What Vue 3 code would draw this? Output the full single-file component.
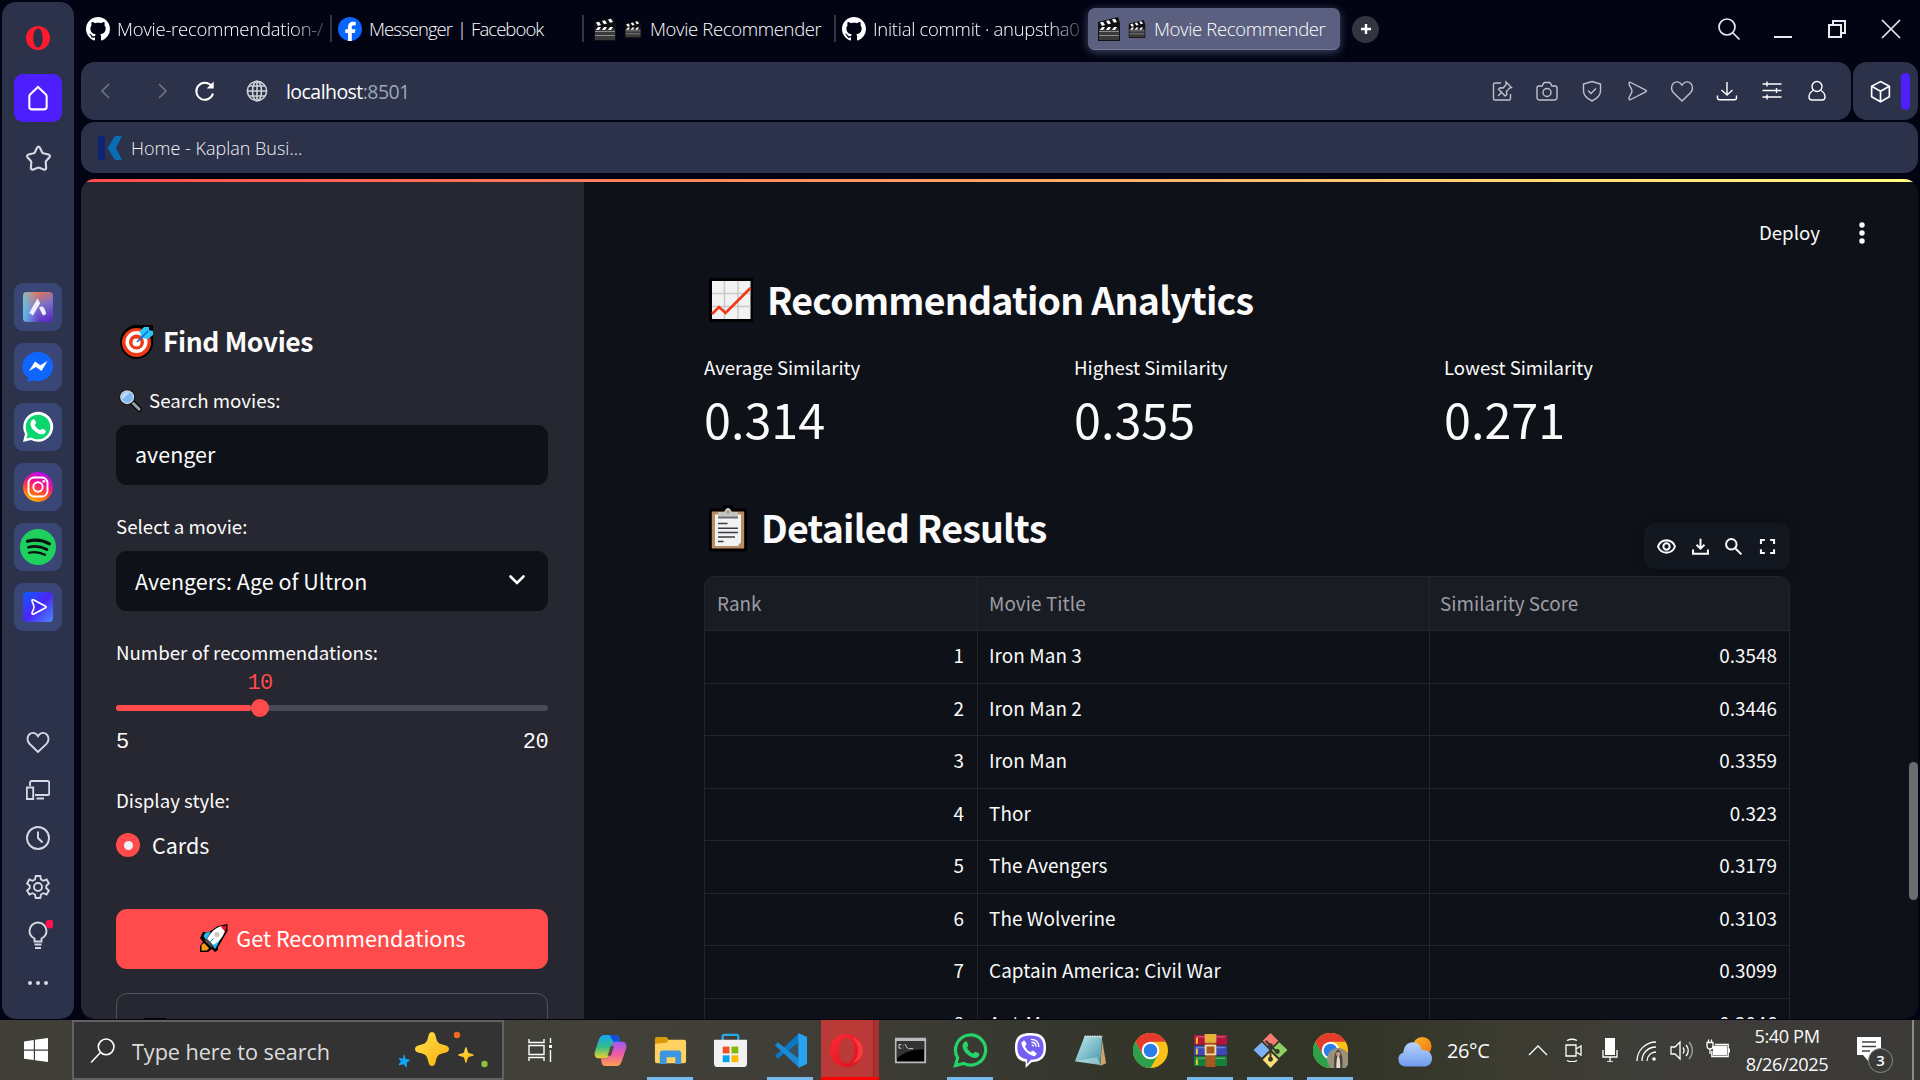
<script setup>
const tabs = [
  { icon: 'github', title: 'Movie-recommendation-/', cls: 't1 fade' },
  { icon: 'facebook', title: 'Messenger | Facebook', cls: 't2' },
  { icon: 'clapper', title: 'Movie Recommender', cls: 't3', extra: true },
  { icon: 'github', title: 'Initial commit · anupstha0', cls: 't4 fade' },
  { icon: 'clapper', title: 'Movie Recommender', cls: 't5 active', extra: true },
]
const apps = ['aria', 'messenger', 'whatsapp', 'instagram', 'spotify', 'player']
const tools = ['heart', 'devices', 'clock', 'gear', 'bulb', 'dots']
const actions = ['pin', 'camera', 'shield', 'send', 'heart', 'download', 'sliders', 'person']
const metrics = [
  { label: 'Average Similarity', value: '0.314' },
  { label: 'Highest Similarity', value: '0.355' },
  { label: 'Lowest Similarity', value: '0.271' },
]
const rows = [
  [1, 'Iron Man 3', '0.3548'],
  [2, 'Iron Man 2', '0.3446'],
  [3, 'Iron Man', '0.3359'],
  [4, 'Thor', '0.323'],
  [5, 'The Avengers', '0.3179'],
  [6, 'The Wolverine', '0.3103'],
  [7, 'Captain America: Civil War', '0.3099'],
  [8, 'Ant-Man', '0.3046'],
]
const taskApps = [
  { icon: 'copilot' },
  { icon: 'explorer', open: true },
  { icon: 'store' },
  { icon: 'vscode', open: true },
  { icon: 'operabig', alert: true },
  { icon: 'cmd' },
  { icon: 'wa', open: true },
  { icon: 'viber' },
  { icon: 'notepad' },
  { icon: 'chrome' },
  { icon: 'winrar', open: true },
  { icon: 'git', open: true },
  { icon: 'chromeuser', open: true },
]
</script>

<template>
  <svg class="defs" aria-hidden="true">
    <defs>
      <linearGradient id="gAria" x1=".3" y1="0" x2=".7" y2="1"><stop offset="0" stop-color="#f2784a" /><stop offset=".5" stop-color="#7a6fc8" /><stop offset="1" stop-color="#5a2fc4" /></linearGradient>
      <linearGradient id="gAria2" x1="0" y1=".5" x2=".5" y2=".5"><stop offset="0" stop-color="#5fd0ee" stop-opacity=".8" /><stop offset="1" stop-color="#5fd0ee" stop-opacity="0" /></linearGradient>
      <linearGradient id="gInsta" x1=".2" y1="1" x2=".6" y2="0"><stop offset="0" stop-color="#ffc400" /><stop offset=".35" stop-color="#ff5a1f" /><stop offset=".65" stop-color="#f5108a" /><stop offset="1" stop-color="#b010ee" /></linearGradient>
      <linearGradient id="gPlay" x1="0" y1="0" x2="1" y2="1"><stop offset="0" stop-color="#0f5cff" /><stop offset=".5" stop-color="#4a25f5" /><stop offset="1" stop-color="#4a8cff" /></linearGradient>
      <linearGradient id="gStar" x1="0" y1="0" x2="1" y2="1"><stop offset="0" stop-color="#ffe14d" /><stop offset="1" stop-color="#f9ae0c" /></linearGradient>
      <linearGradient id="gCopA" x1="0" y1="0" x2="0" y2="1"><stop offset="0" stop-color="#19a5f5" /><stop offset=".5" stop-color="#2fbc8c" /><stop offset="1" stop-color="#f0d22c" /></linearGradient>
      <linearGradient id="gCopB" x1="0" y1="0" x2="0" y2="1"><stop offset="0" stop-color="#9b5cf5" /><stop offset=".5" stop-color="#ee5aa5" /><stop offset="1" stop-color="#ffa04f" /></linearGradient>
      <linearGradient id="gOpera" x1="0" y1="0" x2="1" y2="1"><stop offset="0" stop-color="#ff2a36" /><stop offset="1" stop-color="#d8101d" /></linearGradient>
      <linearGradient id="gCloud" x1="0" y1="0" x2="0" y2="1"><stop offset="0" stop-color="#b8d4fb" /><stop offset="1" stop-color="#6f9bf0" /></linearGradient>
      <linearGradient id="gSun" x1="0" y1="0" x2="1" y2="1"><stop offset="0" stop-color="#fdb924" /><stop offset="1" stop-color="#f2700f" /></linearGradient>
      <linearGradient id="gNote" x1="0" y1="0" x2="1" y2="1"><stop offset="0" stop-color="#c5ecf2" /><stop offset="1" stop-color="#3d93a5" /></linearGradient>
    </defs>
    <symbol id="github" viewBox="0 0 16 16"><path fill="#fff" d="M8 0C3.58 0 0 3.58 0 8c0 3.54 2.29 6.53 5.47 7.59.4.07.55-.17.55-.38 0-.19-.01-.82-.01-1.49-2.01.37-2.53-.49-2.69-.94-.09-.23-.48-.94-.82-1.13-.28-.15-.68-.52-.01-.53.63-.01 1.08.58 1.23.82.72 1.21 1.87.87 2.33.66.07-.52.28-.87.51-1.07-1.78-.2-3.64-.89-3.64-3.95 0-.87.31-1.59.82-2.15-.08-.2-.36-1.02.08-2.12 0 0 .67-.21 2.2.82.64-.18 1.32-.27 2-.27s1.36.09 2 .27c1.53-1.04 2.2-.82 2.2-.82.44 1.1.16 1.92.08 2.12.51.56.82 1.27.82 2.15 0 3.07-1.87 3.75-3.65 3.95.29.25.54.73.54 1.48 0 1.07-.01 1.93-.01 2.2 0 .21.15.46.55.38A8.01 8.01 0 0 0 16 8c0-4.42-3.58-8-8-8z" /></symbol>
    <symbol id="facebook" viewBox="0 0 24 24"><circle cx="12" cy="12" r="12" fill="#0866ff" /><path fill="#fff" d="M10 24v-8H7.3v-3.8H10v-1.7c0-4 1.8-5.8 5.6-5.8.7 0 1.600.1 2.100.3v3.200h-1.500c-1.800 0-2.400.7-2.400 2.400v1.600h3.700l-.7 3.800h-3v8z" /></symbol>
    <symbol id="clapper" viewBox="0 0 24 24"><path fill="#111" d="M1 5 21 0l2 6v18H1z" /><path fill="#3a3a3a" d="M2 11.500h20V23H2z" /><path fill="#8c8c8c" d="M2 14h20v1H2zm0 4h20v1H2z" /><path fill="#fff" d="m3 5.500 3-.8L8 8 5 9zm6-1.600 3-.7L14 6.500l-3 .8zm6-1.500 3-.7L20 5l-3 .8zM3 13l2-3h3l-2 3zm6 0 2-3h3l-2 3zm6 0 2-3h3l-2 3z" /></symbol>
    <symbol id="opera" viewBox="0 0 24 24"><path fill="#ff1b2d" fill-rule="evenodd" d="M12 0a12 12 0 1 0 0 24 12 12 0 0 0 0-24zm0 2.600c2.700 0 4.700 4 4.700 9.400s-2 9.400-4.700 9.400-4.700-4-4.700-9.400S9.300 2.600 12 2.600z" /></symbol>
    <symbol id="home" viewBox="0 0 24 24"><path d="M4 10.500c0-.8.3-1.400.9-2L12 1.800l7.100 6.700c.6.6.9 1.200.9 2V20a2.500 2.500 0 0 1-2.500 2.500h-11A2.500 2.500 0 0 1 4 20z" /></symbol>
    <symbol id="star" viewBox="0 0 24 24"><path d="M12 1.500c.7 0 1 .5 1.300 1l2 4.100c.2.400.6.700 1 .8l4.500 1c1.600.4 1.700 1.700.8 2.700l-2.800 3.100c-.3.400-.5.800-.4 1.300l.4 4.500c.1 1.600-1 2.200-2.300 1.700l-3.700-1.400c-.5-.2-1-.2-1.500 0l-3.800 1.400c-1.300.5-2.400-.1-2.300-1.700l.4-4.500c0-.5-.1-.9-.4-1.300l-2.800-3.100c-.9-1-.8-2.300.8-2.700l4.500-1c.4-.1.800-.4 1-.8l2-4.100c.3-.5.600-1 1.300-1z" /></symbol>
    <symbol id="aria" viewBox="0 0 36 36"><rect x="3" y="3" width="30" height="30" rx="4" fill="url(#gAria)" /><rect x="3" y="3" width="30" height="30" rx="4" fill="url(#gAria2)" /><path fill="#eef" d="m17.500 9.300 2.700 4.900-7.300 12.300-3.600-2.700zM19 18.500l3-1.200c2.300 1.500 3.700 4.200 4.200 7.700l-3.200 1.500z" /></symbol>
    <symbol id="messenger" viewBox="0 0 36 36"><path fill="#0f66ff" d="M18 3a15 14.500 0 1 1-4.500 28.300L8 33l.2-4A15 14.500 0 0 1 18 3z" /><path fill="#fff" d="m9 22 6-9.500 5.300 3.700L27.500 12 21.500 22l-5.500-4z" /></symbol>
    <symbol id="whatsapp" viewBox="0 0 36 36"><path fill="#fff" d="m3 33 2-8a15 15 0 1 1 6 6z" /><circle cx="18" cy="18" r="12.300" fill="#0bd56e" /><path fill="#0bd56e" d="m6.500 29.500 1.500-6 5 4.500z" /><path fill="#fff" d="M12.500 10.800c1-.8 2-.7 2.500.4l1 2.400c.3.900-1.300 2-1.100 2.600 1 2.300 2.700 4 5 4.900.7.200 1.600-1.700 2.400-1.400l2.700 1.300c1 .6.900 1.700.2 2.700-1.500 2-4 2-7 .7-4-1.800-7.500-5.500-7.800-9.300-.1-1.800.8-3.300 2.100-4.300z" /></symbol>
    <symbol id="instagram" viewBox="0 0 36 36"><circle cx="18" cy="18" r="15" fill="url(#gInsta)" /><g fill="none" stroke="#fff" stroke-width="1.900"><rect x="8.500" y="8.500" width="19" height="19" rx="5.500" /><circle cx="18" cy="18" r="4.700" /></g><circle cx="23.800" cy="12.300" r="1.400" fill="#fff" /></symbol>
    <symbol id="spotify" viewBox="0 0 36 36"><circle cx="18" cy="18" r="18" fill="#1ed05e" /><g fill="none" stroke="#0a1210" stroke-linecap="round"><path stroke-width="3.200" d="M7.500 12.300c7-2 15-1.400 22 2.500" /><path stroke-width="2.700" d="M8.500 18.300c6-1.800 12.500-1 18.500 2.200" /><path stroke-width="2.200" d="M9 23.800c5-1.400 10.500-.9 16 2" /></g></symbol>
    <symbol id="player" viewBox="0 0 36 36"><rect x="3" y="3" width="30" height="30" rx="4" fill="url(#gPlay)" /><path fill="none" stroke="#fff" stroke-width="1.600" stroke-linejoin="round" d="M12 11.500c0-.7.700-1 1.400-.7l12.200 6.400c.8.400.8 1.200 0 1.600l-12.200 6.400c-.7.300-1.400 0-1.400-.7 0-2 2-4 2-6.500s-2-4.500-2-6.500z" /></symbol>
    <symbol id="heart" viewBox="0 0 24 24"><path d="M12 22 3.500 13.800C1 11.300.8 7 3.200 4.500c2.400-2.400 6.500-2.200 8.300 1l.5.800.5-.8c1.800-3.200 5.900-3.400 8.300-1 2.400 2.500 2.200 6.800-.3 9.300z" /></symbol>
    <symbol id="devices" viewBox="0 0 24 24"><path d="M4 8V5a2 2 0 0 1 2-2h15.500a1.700 1.700 0 0 1 1.700 1.700v10.600a1.700 1.700 0 0 1-1.700 1.700H9M10.500 20.500H18M.8 9.500h6.400V21H.8z" /></symbol>
    <symbol id="clock" viewBox="0 0 24 24"><circle cx="12" cy="12" r="11" /><path d="M12 5.500V12l4.500 4.500" /></symbol>
    <symbol id="gear" viewBox="0 0 24 24"><path d="M9.700 1h4.600l.7 3.500 2.300 1.300 3.300-1.300 2.300 4-2.600 2.300v2.400l2.600 2.300-2.300 4-3.300-1.300-2.300 1.300-.7 3.500H9.700L9 19.500l-2.300-1.300-3.300 1.300-2.300-4 2.600-2.300v-2.400L1.100 8.500l2.300-4 3.300 1.300L9 4.500z" /><circle cx="12" cy="12" r="4" /></symbol>
    <symbol id="bulb" viewBox="0 0 30 30"><path d="M11.500 21.500v-3C8.500 17 6.500 14.500 6.500 11a8.500 8.500 0 0 1 17 0c0 3.500-2 6-5 7.500v3z" /><path d="M11.500 24.500h7M12 28h6" /><circle cx="27" cy="4" r="4.500" fill="#ff1150" stroke="none" /></symbol>
    <symbol id="dots" viewBox="0 0 24 24"><g fill="#d4dae4" stroke="none"><circle cx="4" cy="12" r="2" /><circle cx="12" cy="12" r="2" /><circle cx="20" cy="12" r="2" /></g></symbol>
    <symbol id="pin" viewBox="0 0 24 24"><path d="M11 4H5a1.500 1.500 0 0 0-1.500 1.500v14A1.500 1.500 0 0 0 5 21h14a1.500 1.500 0 0 0 1.500-1.500V15M16 3l5.500 5.500-2 .5-3 3.500.3 3-1.600 1.500-6.700-6.700 1.600-1.500 3 .2 3-3.300zM11.500 13.500 8 17" /></symbol>
    <symbol id="camera" viewBox="0 0 24 24"><path d="M4 7h3l1.500-2.700c.3-.5.700-.8 1.300-.8h4.400c.6 0 1 .3 1.300.8L17 7h3a2 2 0 0 1 2 2v9.500a2.500 2.500 0 0 1-2.500 2.500h-15A2.500 2.500 0 0 1 2 18.500V9a2 2 0 0 1 2-2z" /><circle cx="12" cy="13.500" r="4" /></symbol>
    <symbol id="shield" viewBox="0 0 24 24"><path d="M12 2.500 20.500 5v7c0 4.500-3.500 7.500-8.500 10-5-2.500-8.500-5.500-8.500-10V5zM8 11.500l3 3 5-5" /></symbol>
    <symbol id="send" viewBox="0 0 24 24"><path d="M4 4.500c0-1 .8-1.500 1.700-1l15 7.600c1 .5 1 1.300 0 1.800l-15 7.600c-.9.500-1.700 0-1.700-1 0-2.500 3-4.700 3-7.500s-3-5-3-7.500z" /></symbol>
    <symbol id="download" viewBox="0 0 24 24"><path d="M12 3v13M6.500 11l5.500 5 5.500-5M2.500 16.500v2.300c0 1.300.7 2 2 2h15c1.300 0 2-.7 2-2v-2.300" /></symbol>
    <symbol id="sliders" viewBox="0 0 24 24"><path d="M2.500 5h19M2.500 11.500h19M2.500 18h19M7 2.500v5M16.500 9v5M7 15.500v5" /></symbol>
    <symbol id="person" viewBox="0 0 24 24"><circle cx="12" cy="7.500" r="5" /><path d="M8 11.500c-2.500 1.500-4 4-4 6.500 0 2 1.200 3 3 3h10c1.800 0 3-1 3-3 0-2.500-1.500-5-4-6.500" /></symbol>
    <symbol id="cube" viewBox="0 0 24 24"><path d="M12 2.500 20.500 7v10L12 21.800 3.500 17V7zM3.500 7l8.500 4.800L20.500 7M12 11.800v10" /></symbol>
    <symbol id="globe" viewBox="0 0 24 24"><circle cx="12" cy="12" r="9.600" /><ellipse cx="12" cy="12" rx="4.500" ry="9.600" /><path d="M2.500 12h19M4 7h16M4 17h16M12 2.400v19" /></symbol>
    <symbol id="reload" viewBox="0 0 24 24"><path d="M20 14.500A8.500 8.500 0 1 1 18.500 7" /><path fill="currentColor" stroke="none" d="M20.700 2.500v7h-7z" /></symbol>
    <symbol id="target" viewBox="0 0 34 34"><path fill="#000" d="M17 0h16v15a16.500 17 0 1 1-16-15z" /><circle cx="16.500" cy="17.500" r="14.500" fill="#f03a17" /><circle cx="16.500" cy="17" r="11" fill="#fff" /><circle cx="16.500" cy="17" r="7.500" fill="#f03a17" /><circle cx="16.500" cy="17.500" r="4" fill="#fff" /><path fill="#26c6f7" d="m20 6 4-4h5v3l4 1v4l-5 4-7-1z" /><path stroke="#1266d6" stroke-width="1.600" d="m17 17 11-11" /></symbol>
    <symbol id="loupe" viewBox="0 0 24 24"><path stroke="#000" stroke-width="5.500" stroke-linecap="round" d="m14 14 7 7" /><path stroke="#90a4ae" stroke-width="3" stroke-linecap="round" d="m14 14 7 7" /><circle cx="8.500" cy="8.500" r="8.300" fill="#111" /><circle cx="8.500" cy="8.500" r="7.300" fill="#c9d8e2" /><circle cx="8.500" cy="8.500" r="5.800" fill="#7fb8f0" /><path fill="#b8dcfa" d="M3.500 11a6 6 0 0 1 8-7.500z" /></symbol>
    <symbol id="rocket" viewBox="0 0 28 28"><path fill="#000" d="M27.500 0v7L21 18l-3 5v3l-3 2-3-3-4 3H0v-6l3-4-3-4 3-6h6L18 2z" /><path fill="#25b9f2" d="m3.500 12 2-3.500L11 8l-5 8zM15 17l5-1-3 6-2 3-3-4z" /><path fill="#fff" d="M22 2c-6 1-11 6-15 13l6 6c6-3 10-8 12-14z" /><path fill="#e8112d" d="M20.500 2.500 26.300 1.500 25.500 8z" /><circle cx="17" cy="10.500" r="2.600" fill="#c6c6c6" /><path fill="#4a4a4a" d="m6.500 15 7 6.500-2 2-7-6.500z" /><path fill="#fb9a16" d="m4 19 5 5-2 2.500H1.500V21z" /><path stroke="#1b9de0" d="m9.500 18.500 4-4" /></symbol>
    <symbol id="chart" viewBox="0 0 44 44"><path d="M0 0h44v44H0z" /><path fill="#f2f2f2" d="M3 3h38.500v38H3z" /><path fill="none" stroke="#c9c9c9" stroke-width="1.500" d="M15.500 3v38M29 3v38M3 15.500h38.500M3 28.500h38.500" /><path fill="none" stroke="#f03a17" stroke-width="2.700" d="m3 36 7-7 6.500 6L41.500 10" /></symbol>
    <symbol id="clipboard" viewBox="0 0 38 46"><path d="M2 3h11l2-3h8l2 3h11l2 2v39l-2 2H2l-2-2V5z" /><path fill="#b98c62" d="M2.800 6h32.400v37H2.800z" /><path fill="#f2f2f2" d="M6 9h26v28l-3 3.500H6z" /><path fill="#c3c3c3" d="M9 6.500h6L16.500 4c1-2 4-2 5 0L23 6.500h6V11H9z" /><circle cx="19" cy="6.500" r="1.500" fill="#b98c62" /><path stroke="#3c3a42" stroke-width="1.500" d="M9 18h9.500M9 22.700h20M9 27h20M9 31.500h17M9 36h5.500" /><path stroke="#6b6b6b" stroke-width="2" d="M9 12h20" /><path fill="#b98c62" d="M32 37v3.500h-3z" /></symbol>
    <symbol id="eye" viewBox="0 0 24 24"><path d="M12 5C7.500 5 4 7.500 2.300 12 4 16.500 7.500 19 12 19s8-2.500 9.700-7C20 7.500 16.500 5 12 5z" /><circle cx="12" cy="12" r="3.600" /></symbol>
    <symbol id="tdown" viewBox="0 0 24 24"><path d="M12 3v11M7.500 10l4.500 4.500 4.500-4.500M3.500 15.500v4.700h17v-4.700" /></symbol>
    <symbol id="tsearch" viewBox="0 0 24 24"><circle cx="9.500" cy="9.500" r="6" /><path d="m14 14 7 7" /></symbol>
    <symbol id="tfull" viewBox="0 0 24 24"><path d="M4.500 9V4.500H9M15 4.500h4.500V9M19.500 15v4.500H15M9 19.500H4.500V15" /></symbol>
    <symbol id="copilot" viewBox="0 0 36 36"><path fill="url(#gCopA)" d="M12 2h11c2 0 3.500 1.200 4 3l1 4h-4c-2.500 0-4 1.500-4.700 4L17 22c-.8 2.500-2 4-5 4H6c-4 0-5-3-4-7L6 7c1-3.500 3-5 6-5z" /><path fill="#1550d8" d="M17 2h6c2 0 3.500 1.200 4 3l1 4h-7z" /><path fill="url(#gCopB)" d="M24 34H13c-2 0-3.500-1.200-4-3l-1-5h4c3 0 4.200-1.500 5-4l2.300-9c.7-2.500 2-4 5-4H30c4 0 5 3 4 7l-4 12c-1 4-3 6-6 6z" /><path fill="#3f403a" d="M18 13.500h3.500l-3 10H15z" opacity=".85" /></symbol>
    <symbol id="explorer" viewBox="0 0 36 36"><path fill="#d99a0b" d="M2 6a2 2 0 0 1 2-2h10l3 4v5H2z" /><path fill="#ffd262" d="M2 11 14 10l2-3h16a2 2 0 0 1 2 2v20a2 2 0 0 1-2 2H4a2 2 0 0 1-2-2z" /><path fill="#3b97e0" d="M7 21a3 3 0 0 1 3-3h16a3 3 0 0 1 3 3v11h-6v-7h-9v7H7z" /></symbol>
    <symbol id="store" viewBox="0 0 36 36"><path fill="none" stroke="#29a8ea" stroke-width="2.400" d="M10 10V3.500A1.500 1.500 0 0 1 11.500 2h13A1.500 1.500 0 0 1 26 3.500V10" /><path fill="#f2f2f2" d="M1 7h34v24a4 4 0 0 1-4 4H5a4 4 0 0 1-4-4z" /><path fill="#f25022" d="M10 14h7v7h-7z" /><path fill="#7fba00" d="M19 14h7v7h-7z" /><path fill="#00a4ef" d="M10 23h7v7h-7z" /><path fill="#ffb900" d="M19 23h7v7h-7z" /></symbol>
    <symbol id="vscode" viewBox="0 0 36 36"><path fill="#0a78c4" d="M26 1 2 23.500l3 3L27 9z" /><path fill="#1a8ad4" d="M26 35 2 12.500l3-3L27 27z" /><path fill="#27a3ef" d="m26 0 9 4v28l-9 4z" /><path fill="#1a8ad4" d="m26 9-11 9 11 9z" opacity=".25" /></symbol>
    <symbol id="operabig" viewBox="0 0 36 36"><path fill="url(#gOpera)" fill-rule="evenodd" d="M18 1a17 17 0 1 0 0 34 17 17 0 0 0 0-34zm0 4c4.500 0 8 5.500 8 13s-3.500 13-8 13-8-5.500-8-13 3.500-13 8-13z" /><path fill="#ff4a4a" d="M24 5c4 4 6 8 6 13s-2 9-6 13c6-1 11-6 11-13S30 6 24 5z" opacity=".7" /></symbol>
    <symbol id="cmd" viewBox="0 0 36 36"><path fill="#b9bcbe" d="M1 4h34v28H1z" /><path d="M3 8h30v22H3z" /><path fill="#333" d="M3 8h30v9c-10-1-22 2-30 10z" /><path fill="none" stroke="#ddd" d="M8 11.500H5.500v4H8M10 12.500v.5M10 15v.5M12 11l3 5M16 16h5" /></symbol>
    <symbol id="wa" viewBox="0 0 36 36"><path fill="none" stroke="#25d366" stroke-width="3.300" d="m2.500 33.500 2.300-8A15.500 15.500 0 1 1 11 31.300z" /><path fill="#25d366" d="M12 9c1-.8 2-.6 2.500.4l1.300 3c.3.900-1.500 2-1.300 2.700 1 2.500 3.500 5 6 6 .9.300 2-2 2.900-1.700l3 1.500c1 .6.900 1.700.2 2.700-1.500 2.300-4.500 2.600-7.500 1.300-4.500-2-9-6.500-9.300-10.900-.1-2 .8-4 2.200-5z" /></symbol>
    <symbol id="viber" viewBox="0 0 36 36"><path fill="#fff" d="M18 0c11 0 16 4 16 15 0 10-5 15-15 15l-6 6v-6.500C5 28.500 2 24 2 15 2 4 7 0 18 0z" /><path fill="#7360f2" d="M18 2.500c9.500 0 13.500 3.500 13.500 12.500 0 8.500-4 12.500-13 12.500l-4 4.500v-5C7.500 26 4.500 22.500 4.500 15c0-9 4-12.500 13.500-12.500z" /><path fill="#fff" d="M11.500 7.500 14 11l-1.500 2.500c1 3 3 5 5.500 6L20.500 18l4 3-2 3c-6-1-13-7-14-14z" /><path fill="none" stroke="#fff" stroke-width="1.400" d="M18.500 6.500c5 0 8 3 8 8M19 9.500c3 0 4.700 1.800 4.700 4.700M19.300 12.300c1.100 0 1.700.7 1.700 1.700" /></symbol>
    <symbol id="notepad" viewBox="0 0 36 36"><path fill="#cda36a" d="m30 7 4 24-6 3z" /><path fill="url(#gNote)" d="M12 3h18l-2 30-26-4z" /><path stroke="#d9dcdc" stroke-width="2" stroke-dasharray="1.500 1" d="M12 3.500h18" /><path fill="#fff" d="m2 29 26 4-3-8z" opacity=".35" /></symbol>
    <symbol id="chrome" viewBox="0 0 36 36"><circle cx="18" cy="18" r="18" fill="#fbc116" /><path fill="#e33b2e" d="M2.400 9A18 18 0 0 1 33.600 9H18l-8 13.500z" /><path fill="#2da04e" d="M2.400 9A18 18 0 0 0 18 36l7.800-13.500H10.200z" /><circle cx="18" cy="18" r="9" fill="#fff" /><circle cx="18" cy="18" r="7" fill="#2b7de9" /></symbol>
    <symbol id="chromeuser" viewBox="0 0 36 36"><use href="#chrome" width="36" height="36" /><circle cx="26" cy="27" r="11.500" fill="#99907c" /><path fill="#4d453c" d="M22 37c-1-9 0-18 4-20 4 2 5 11 4 20z" /><path fill="#e3ddd0" d="M24 36c0-6 .5-12 2-13 1.500 1 2 7 2 13z" /><circle cx="26" cy="21.500" r="2.300" fill="#c09878" /></symbol>
    <symbol id="winrar" viewBox="0 0 36 36"><path fill="#b3153e" d="M1 2h34v10H1z" /><path fill="#3a48b8" d="M1 13h34v10H1z" /><path fill="#148038" d="M1 24h34v10H1z" /><path stroke="#ffffff" stroke-opacity=".3" stroke-width="1.500" d="M3 4h30M3 15h30M3 26h30" /><path fill="#f5c92c" d="M3 5h2v6H3zm0 11h2v6H3zm0 11h2v6H3z" /><path fill="#a9581f" d="M13 1h10v34H13z" /><path fill="#e5b13a" d="M12 1h12v9H12z" /><path fill="none" stroke="#eed9a8" stroke-width="2" d="M13 13h10v9H13z" /></symbol>
    <symbol id="git" viewBox="0 0 36 36"><path fill="#f47c73" d="M18 0 26 8l-8 8-8-8z" /><path fill="#7eb0f5" d="m9 9.500 8 8-8 8-8.500-8z" /><path fill="#8ccf62" d="m27 9.500 8.500 8-8.500 8-8-8z" /><path fill="#fbdf79" d="m18 19.500 8 8-8 8.500-8-8.500z" /><path fill="none" stroke="#35382c" stroke-width="2" d="M13 8l5 5v15M18 14l8 6" /><g fill="#35382c"><circle cx="18" cy="13" r="2.500" /><circle cx="18" cy="27" r="2.500" /><circle cx="25" cy="19" r="2.500" /></g></symbol>
  </svg>

  <div class="screen">
    <div class="browser">
      <aside class="rail">
        <svg class="logo"><use href="#opera" /></svg>
        <div class="home"><svg><use href="#home" /></svg></div>
        <svg class="star"><use href="#star" /></svg>
        <div class="apps">
          <div v-for="a in apps" :key="a" class="app"><svg><use :href="'#' + a" /></svg></div>
        </div>
        <div class="tools">
          <div v-for="t in tools" :key="t" class="tool"><svg :class="t"><use :href="'#' + t" /></svg></div>
        </div>
      </aside>

      <div class="window">
        <header class="tabs">
          <div v-for="t in tabs" :key="t.cls" class="tab" :class="t.cls">
            <svg class="fav"><use :href="'#' + t.icon" /></svg>
            <svg v-if="t.extra" class="mini"><use href="#clapper" /></svg>
            <span>{{ t.title }}</span>
          </div>
          <div class="plus"><svg viewBox="0 0 12 12"><path d="M6 1v10M1 6h10" /></svg></div>
          <div class="controls">
            <svg viewBox="0 0 24 24"><circle cx="10" cy="10" r="8" /><path d="m15.500 15.500 7 7" /></svg>
            <svg viewBox="0 0 24 24" class="heavy"><path d="M3 20h18" /></svg>
            <svg viewBox="0 0 24 24" class="heavy"><path d="M4 8h12v12H4zM8 8V4h12v12h-4" /></svg>
            <svg viewBox="0 0 24 24"><path d="m3 3 18 18M21 3 3 21" /></svg>
          </div>
        </header>

        <div class="bars">
          <nav class="address">
            <svg class="back" viewBox="0 0 24 24"><path d="m15 5-7 7 7 7" /></svg>
            <svg class="fwd" viewBox="0 0 24 24"><path d="m9 5 7 7-7 7" /></svg>
            <svg class="reload"><use href="#reload" /></svg>
            <svg class="globe"><use href="#globe" /></svg>
            <span class="url">localhost<i>:8501</i></span>
            <div class="actions">
              <svg v-for="(a, i) in actions" :key="a" :class="{ bright: i > 4 }"><use :href="'#' + a" /></svg>
            </div>
          </nav>
          <div class="side"><svg><use href="#cube" /></svg><b></b></div>
        </div>

        <div class="bookmarks">
          <svg viewBox="0 0 24 24"><path fill="#0f2573" d="M0 0h7v24H0z" /><path fill="#0a6cb4" d="M17 0h7l-6 12 6 12h-7L9.500 12z" /></svg>
          <span>Home - Kaplan Busi...</span>
        </div>

        <div class="page">
          <div class="rainbow"></div>
          <div class="split">
            <section class="panel">
              <h3><svg><use href="#target" /></svg><span>Find Movies</span></h3>
              <label class="l1"><svg><use href="#loupe" /></svg>Search movies:</label>
              <div class="field">avenger</div>
              <label class="l2">Select a movie:</label>
              <div class="field pick">Avengers: Age of Ultron<svg viewBox="0 0 18 12"><path d="m2.500 2.500 6.500 6.500 6.500-6.500" /></svg></div>
              <label class="l2">Number of recommendations:</label>
              <div class="val">10</div>
              <div class="track"><div class="done"></div><div class="thumb"></div></div>
              <div class="ends"><span>5</span><span>20</span></div>
              <label class="l4">Display style:</label>
              <div class="radio"><i></i><span>Cards</span></div>
              <button class="go"><svg><use href="#rocket" /></svg>Get Recommendations</button>
              <div class="expander"><i></i></div>
            </section>

            <section class="main">
              <div class="deploy"><span>Deploy</span><svg viewBox="0 0 6 22"><circle cx="3" cy="3" r="2.700" /><circle cx="3" cy="11" r="2.700" /><circle cx="3" cy="19" r="2.700" /></svg></div>
              <h2><svg class="chart"><use href="#chart" /></svg><span>Recommendation Analytics</span></h2>
              <div class="metrics">
                <div v-for="m in metrics" :key="m.label" class="metric"><p>{{ m.label }}</p><strong>{{ m.value }}</strong></div>
              </div>
              <div class="results">
                <h2><svg class="clip"><use href="#clipboard" /></svg><span>Detailed Results</span></h2>
                <div class="toolbar">
                  <svg><use href="#eye" /></svg><svg><use href="#tdown" /></svg><svg><use href="#tsearch" /></svg><svg><use href="#tfull" /></svg>
                </div>
              </div>
              <div class="grid">
                <div class="row head"><span>Rank</span><span>Movie Title</span><span>Similarity Score</span></div>
                <div v-for="r in rows" :key="r[0]" class="row"><span class="num">{{ r[0] }}</span><span>{{ r[1] }}</span><span class="num">{{ r[2] }}</span></div>
              </div>
              <div class="scroll"></div>
            </section>
          </div>
        </div>
      </div>
    </div>

    <footer class="taskbar">
      <div class="start"><svg viewBox="0 0 24 24"><path fill="#fff" d="M0 3.400 9.800 2v9.500H0zM11 1.800 24 0v11.500H11zM0 12.700h9.800v9.400L0 20.700zM11 12.700h13V24l-13-1.800z" /></svg></div>
      <div class="search">
        <svg class="mag" viewBox="0 0 24 24"><circle cx="15.500" cy="8.500" r="7.500" /><path d="M10 14 1 23.500" /></svg>
        <span>Type here to search</span>
        <svg class="sparkles" viewBox="0 0 100 44">
          <path fill="url(#gStar)" d="M40 5c1.500 0 3 1 3.600 4 1.700 7 2.400 7.500 9.400 9.200 2.600.7 4 1.800 4 3.800s-1.400 3.100-4 3.800c-7 1.700-7.700 2.200-9.400 9.200-.6 3-2.100 4-3.600 4s-3-1-3.600-4c-1.700-7-2.400-7.500-9.400-9.200-2.600-.7-4-1.800-4-3.800s1.400-3.100 4-3.800c7-1.700 7.700-2.200 9.400-9.200.6-3 2.100-4 3.600-4z" />
          <path fill="url(#gStar)" d="M74 20c1 0 1.500 5 2.300 5.700.8.900 5.700 1.300 5.700 2.300s-4.900 1.400-5.700 2.300C75.500 31 75 36 74 36s-1.500-5-2.300-5.700c-.8-.9-5.700-1.300-5.700-2.300s4.900-1.400 5.700-2.300C72.500 25 73 20 74 20z" />
          <path fill="#10a5f5" d="M12 27.500c1 0 1 4 2 4.500s3.500 0 3.700 1-2.700 2-3 3 1 4-.2 4.300-2-2.800-3-3-4 1.700-4.600.7 2-2.500 2-3.500-2.500-2.500-2-3.300 3.200.8 4 .3.300-4 1.100-4z" />
          <circle cx="65" cy="8" r="3.200" fill="#f26a21" /><circle cx="92.500" cy="37" r="3.200" fill="#86c440" />
        </svg>
      </div>
      <div class="taskview"><svg viewBox="0 0 24 24"><path d="M1 1v3.500h15V1M1 7.500h15v9H1zM1 23v-3.500h15V23M22.500 0v5M22.500 12v12" /><path d="M21 7h3v3h-3z" fill="#fff" stroke="none" /></svg></div>
      <div class="dock">
        <div v-for="t in taskApps" :key="t.icon" class="slot" :class="{ open: t.open, alert: t.alert }"><svg :class="t.icon"><use :href="'#' + t.icon" /></svg></div>
      </div>
      <div class="weather">
        <svg viewBox="0 0 38 32"><circle cx="26" cy="10" r="9.500" fill="url(#gSun)" /><path fill="url(#gCloud)" d="M8 31a7.500 7.500 0 0 1-1.500-14.500C7 10 11 6 16 6c5 0 8.500 3.500 9.500 8 6-.5 10.500 3 10.500 8.500S32 31 28 31z" /></svg>
        <span>26°C</span>
      </div>
      <div class="tray">
        <svg viewBox="0 0 24 24"><path d="m3 17 9-9 9 9" /></svg>
        <svg viewBox="0 0 24 24"><path d="M4 7h10v11H4zM14 11l5-3v9l-5-3M5 2.500c3-1.500 7-1.500 10 0M5 22.500c3 1.500 7 1.500 10 0" /></svg>
        <svg viewBox="0 0 24 24"><path fill="#fff" stroke="none" d="M7 0h10v17H7z" /><path d="M5 12v7h14v-7M12 19v5M9 24h6" /></svg>
        <svg viewBox="0 0 24 24"><path d="M3 23C3 12 12 4 22 4M8 23c0-8 6-14 14-14M13 23c0-5 4-9 9-9" /><circle cx="20" cy="21" r="1.800" fill="#fff" stroke="none" /></svg>
        <svg viewBox="0 0 24 24"><path d="M1 9v7h4l5 5V4L5 9zM13 9.500c1.500 2 1.500 4 0 6M16 7c3 3 3 8 0 11" /><path opacity=".5" d="M19 4c4.500 5 4.500 12 0 17" /></svg>
        <svg viewBox="0 0 24 24"><path fill="#fff" d="M7.500 8.500h12.800v8H7.500z" /><path d="M9 6.500h13.200v12H5.800V13M23.500 10.500v4M1 4.500h6v3.500c0 2-1.500 3-3 3S1 10 1 8zM2.500 4.500v-3M5.500 4.500v-3M4 11v5" /></svg>
      </div>
      <div class="time"><span>5:40 PM</span><span>8/26/2025</span></div>
      <div class="notes"><svg viewBox="0 0 24 26"><path fill="#fff" d="M0 0h24v18H14l-2 7-6-7H0z" /><path stroke="#444" stroke-width="1.500" d="M5 5h14M5 9.500h14M5 14h8" /></svg><b>3</b></div>
      <div class="edge"></div>
    </footer>
  </div>
</template>

<style>
body { margin: 0; background: #020414; }
</style>

<style scoped>
* { box-sizing: border-box; }
svg { display: block; flex: none; }
h2, h3, p { margin: 0; }
.defs { position: absolute; width: 0; height: 0; }
.screen { width: 1920px; height: 1080px; overflow: hidden; display: flex; flex-direction: column; background: #020414; font-family: "Noto Sans CJK SC", "Noto Sans CJK JP", sans-serif; color: #fafafa; }
.browser { height: 1020px; display: flex; padding: 2px 2px 1px; gap: 7px; }

.rail { width: 72px; height: 1017px; flex: none; background: #2b324a; border-radius: 14px; display: flex; flex-direction: column; align-items: center; fill: none; stroke: #d4dae4; stroke-width: 1.9; }
.logo { width: 24px; height: 24px; margin-top: 24px; stroke: none; }
.home { width: 48px; height: 48px; margin-top: 24px; border-radius: 9px; background: #4d1fff; display: grid; place-items: center; stroke: #fff; }
.home svg { width: 26px; height: 26px; }
.star { width: 27px; height: 27px; margin-top: 23px; }
.apps { margin-top: 111px; display: flex; flex-direction: column; gap: 12px; }
.app { width: 48px; height: 48px; border-radius: 9px; background: #3a4676; display: grid; place-items: center; stroke: none; }
.app svg { width: 36px; height: 36px; }
.tools { margin-top: 87px; display: flex; flex-direction: column; }
.tool { height: 48.200px; display: grid; place-items: center; }
.tool svg { width: 24px; height: 24px; }
.tool .bulb { width: 30px; height: 30px; overflow: visible; }

.window { width: 1837px; display: flex; flex-direction: column; flex: none; }
.tabs { height: 60px; display: flex; align-items: center; font: 300 18.500px "Open Sans", "Noto Sans", sans-serif; color: #fff; padding-bottom: 6px; }
.tab { height: 42px; display: flex; align-items: center; gap: 7px; position: relative; white-space: nowrap; flex: none; letter-spacing: -.35px; }
.tab:not(.active) span { margin-top: -2px; }
.tab .mini + span { margin-left: -1px; }
.t2::before, .t3::before, .t4::before { content: ""; position: absolute; left: 0; top: 7px; width: 2px; height: 27px; background: #33353f; }
.fav { width: 24px; height: 24px; }
.mini { width: 18px; height: 20px; margin: 0 2px 0 0; }
.t1 { width: 249px; padding-left: 5px; letter-spacing: -.25px; }
.t2 { width: 252px; padding-left: 8px; letter-spacing: -.92px; word-spacing: 1px; }
.t3 { width: 252px; padding-left: 11px; }
.t4 { width: 254px; padding-left: 8px; letter-spacing: -.3px; }
.t5 { width: 252px; padding-left: 9px; }
.fade span { -webkit-mask-image: linear-gradient(90deg, #000 85%, transparent 106%); mask-image: linear-gradient(90deg, #000 85%, transparent 106%); }
.active { background: #5c6080; border-radius: 7px; box-shadow: 0 2px 8px #444a66; border-bottom: 1px solid #777c9e; }
.plus { width: 27px; height: 27px; margin-left: 12px; border-radius: 50%; background: #32343f; display: grid; place-items: center; }
.plus svg { width: 12px; height: 12px; stroke: #fff; stroke-width: 2.400; }
.controls { margin-left: auto; margin-right: 15px; display: flex; gap: 30px; fill: none; stroke: #e8eaf0; stroke-width: 1.700; }
.controls svg { width: 24px; height: 24px; }
.heavy { stroke-width: 2; }

.bars { height: 58px; display: flex; gap: 2px; }
.address, .side, .bookmarks { background: #2b324a; border-radius: 14px; display: flex; align-items: center; }
.address { width: 1770px; flex: none; fill: none; stroke: #fff; stroke-width: 1.600; color: #fff; }
.address svg { width: 24px; height: 24px; }
.back { margin-left: 13px; stroke: #6f7588; }
.fwd { margin-left: 32px; stroke: #6f7588; }
.reload { margin-left: 19px; stroke-width: 2; }
.globe { margin-left: 28px; stroke: #cfd2d6; }
.url { margin-left: 17px; font: 19.500px "Open Sans", sans-serif; letter-spacing: -.55px; stroke: none; }
.url i { font-style: normal; color: #9fa6b8; }
.actions { margin-left: auto; margin-right: 22px; display: flex; gap: 21px; stroke: #bfc3ca; stroke-width: 1.400; }
.bright { stroke: #fff; }
.side { flex: 1; padding-left: 15px; gap: 8px; }
.side svg { width: 25px; height: 25px; fill: none; stroke: #fff; stroke-width: 1.600; }
.side b { width: 9px; height: 37px; border-radius: 5px; background: #4d1fff; }
.bookmarks { height: 51px; margin-top: 2px; padding-left: 17px; gap: 9px; font: 300 18px "Open Sans", sans-serif; color: #f0f1f5; }
.bookmarks svg { width: 24px; height: 24px; }

.page { margin-top: 6px; height: 840px; border-radius: 14px; overflow: hidden; background: #0e1117; display: flex; flex-direction: column; }
.rainbow { height: 3px; background: linear-gradient(90deg, #ff4b4b, #fffd80); flex: none; }
.split { display: flex; height: 837px; }
.panel { width: 503px; background: #262730; padding: 139px 36px 0 35px; display: flex; flex-direction: column; height: 837px; overflow: hidden; flex: none; }
h3 { height: 42px; flex: none; display: flex; align-items: center; font-size: 26.500px; line-height: 40px; font-weight: 700; padding-left: 4px; gap: 9px; letter-spacing: -.4px; }
h3 span { margin-top: -2px; }
h3 svg { width: 34px; height: 34px; }
label { display: flex; align-items: center; height: 30px; font-size: 18.700px; line-height: 28px; padding-bottom: 2px; flex: none; }
.l1 { margin-top: 23px; padding-left: 3px; gap: 7px; }
.l1 svg { width: 23px; height: 23px; }
.field { margin-top: 9px; height: 60px; border-radius: 11px; background: #0e1117; padding: 0 19px; font-size: 21.500px; line-height: 57px; flex: none; white-space: nowrap; }
.pick { display: flex; justify-content: space-between; align-items: center; padding-right: 22px; padding-bottom: 2px; }
.pick svg { width: 18px; height: 12px; fill: none; stroke: #fff; stroke-width: 2.600; stroke-linecap: round; }
.l2 { margin-top: 27px; }
.val { width: 288px; text-align: center; height: 30px; line-height: 32px; color: #ff4b4b; flex: none; }
.val, .ends { font-family: "Liberation Mono", monospace; font-size: 22px; letter-spacing: -.6px; }
.track { margin-top: 7px; height: 6px; border-radius: 3px; background: #4a4b54; display: flex; align-items: center; flex: none; }
.done { width: 135px; height: 6px; border-radius: 3px; background: #ff4b4b; }
.thumb { width: 18px; height: 18px; border-radius: 50%; background: #ff4b4b; }
.ends { margin-top: 16px; height: 30px; line-height: 32px; display: flex; justify-content: space-between; flex: none; }
.l4 { margin-top: 29px; }
.radio { margin-top: 14px; height: 30px; display: flex; align-items: center; gap: 12px; font-size: 21.500px; flex: none; }
.radio span { margin-top: -2px; }
.radio i { width: 24px; height: 24px; border-radius: 50%; background: #ff4b4b; display: grid; place-items: center; }
.radio i::before { content: ""; width: 9px; height: 9px; border-radius: 50%; background: #f0f2f6; }
.go { margin: 49px 0 0; padding: 0 0 2px 2px; border: 0; height: 60px; border-radius: 11px; background: #ff4b4b; color: #fff; display: flex; align-items: center; justify-content: center; gap: 8px; font: 21.600px/56px "Noto Sans CJK SC", sans-serif; flex: none; }
.go svg { width: 28px; height: 28px; }
.expander { margin-top: 24px; height: 90px; border: 1px solid #51525b; border-radius: 11px; flex: none; padding: 24px 27px; }
.expander i { display: block; width: 22px; height: 8px; background: #000; }

.main { width: 1334px; height: 837px; position: relative; padding-left: 120px; display: flex; flex-direction: column; overflow: hidden; }
.main > * { flex: none; }
.deploy { height: 36px; margin: 33px 53px 0 0; display: flex; align-items: center; justify-content: flex-end; gap: 39px; font-size: 18.700px; }
.deploy span { margin-top: -3px; }
.deploy svg { width: 6px; height: 22px; fill: #fff; }
h2 { display: flex; align-items: center; height: 60px; font-size: 37.500px; line-height: 60px; font-weight: 700; white-space: nowrap; }
h2 span { letter-spacing: -.78px; margin-top: -2px; }
.chart { width: 44px; height: 44px; margin: 0 14px 0 5px; }
.clip { width: 38px; height: 47px; margin: 0 14px 0 5px; }
.deploy + h2 { margin-top: 19px; }
.metrics { display: flex; margin-top: 22px; }
.metric { width: 370px; }
.metric p { font-size: 18.600px; line-height: 30px; height: 30px; }
.metric strong { display: block; font-weight: 400; font-size: 48.500px; line-height: 73px; height: 76px; }
.results { display: flex; justify-content: space-between; align-items: flex-start; margin: 39px 128px 0 0; height: 79px; padding-top: 6px; }
.results h2 { margin-top: -5px; }
.toolbar { width: 146px; height: 46px; margin-top: 20px; border-radius: 11px; background: #131720; box-shadow: 0 2px 8px #0a0c1180; display: flex; align-items: center; justify-content: center; gap: 12.500px; fill: none; stroke: #fafafa; stroke-width: 2.300; }
.toolbar svg { width: 21px; height: 21px; }
.grid { width: 1086px; border: 1px solid #22252c; border-bottom: 0; border-radius: 11px 11px 0 0; overflow: hidden; }
.row { display: grid; grid-template-columns: 273px 452px 1fr; height: 52.500px; border-bottom: 1.500px solid #24262d; font-size: 18.900px; line-height: 47px; }
.row span { padding: 0 13px 0 12px; border-right: 1.500px solid #24262d; white-space: nowrap; }
.row span:nth-child(2) { padding-left: 11px; letter-spacing: .08px; }
.row span:last-child { border-right: 0; padding: 0 12px 0 10px; }
.head { height: 54px; background: #1a1c24; color: #9c9da3; line-height: 51px; }
.num { text-align: right; }
.scroll { position: absolute; right: 0; top: 580px; width: 9px; height: 138px; border-radius: 5px; background: #6b6c70; }

.taskbar { height: 60px; display: flex; align-items: center; background: linear-gradient(90deg, #403f37 0, #43423a 400px, #3f3e38 800px, #34362c 1100px, #323427 1340px, #3b3b2f 1500px, #3e3d39 1650px, #3b3a38 1920px); font-family: "Open Sans", "Noto Sans", sans-serif; }
.start { width: 72px; padding-left: 24px; }
.start svg { width: 24px; height: 24px; }
.search { width: 432px; height: 60px; background: #333; border: 2px solid #626262; display: flex; align-items: center; padding: 0 12px 0 16px; }
.mag { width: 25px; height: 25px; fill: none; stroke: #fff; stroke-width: 1.500; }
.search span { margin: 2px 0 0 17px; font-size: 21.700px; letter-spacing: -.08px; color: #dcdcdc; white-space: nowrap; }
.sparkles { width: 100px; height: 44px; margin-left: auto; margin-right: -2px; margin-top: -2px; }
.taskview { width: 76px; padding-left: 24px; }
.taskview svg { width: 24px; height: 24px; fill: none; stroke: #fff; stroke-width: 1.400; }
.dock { display: flex; }
.slot { width: 60px; height: 60px; display: grid; place-items: center; }
.slot svg { width: 35px; height: 35px; }
.slot .cmd { width: 33px; height: 33px; }
.open { background: linear-gradient(#76b9ed, #76b9ed) 50% 100% / 46px 3px no-repeat; }
.alert { background: linear-gradient(#ff0000, #ff0000) 0 100% / 58px 3px no-repeat, linear-gradient(90deg, #ba3a37 52px, #8e2a28 52px, #8e2a28 53px, #a63330 53px) 0 0 / 58px 60px no-repeat; margin-left: 1px; width: 59px; padding-right: 8px; }
.weather { margin-left: 37px; width: 129px; display: flex; align-items: center; gap: 13px; font-size: 20px; letter-spacing: -.4px; }
.weather svg { width: 37px; height: 32px; margin-top: 4px; }
.tray { display: flex; gap: 12px; fill: none; stroke: #fff; stroke-width: 1.300; }
.tray svg { width: 24px; height: 24px; }
.time { width: 100px; margin-left: 7px; display: flex; flex-direction: column; align-items: center; font-size: 18.200px; line-height: 28px; letter-spacing: -.4px; white-space: nowrap; }
.notes { position: relative; margin-left: 20px; width: 24px; height: 26px; }
.notes svg { width: 24px; height: 26px; }
.notes b { position: absolute; left: 11px; top: 11px; width: 25px; height: 25px; border-radius: 50%; border: 1px solid #8a8a8a; background: #3a3a38; font: 600 15px/23px "Open Sans", sans-serif; text-align: center; }
.edge { width: 2px; height: 60px; margin-left: auto; margin-right: 6px; background: #8b8b8a; }
</style>
